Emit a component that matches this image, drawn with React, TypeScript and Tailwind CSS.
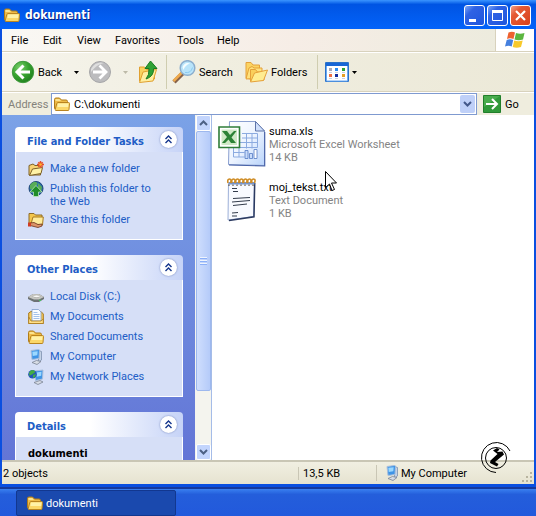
import React from "react";

interface IconProps {
  className?: string;
}

const FolderIcon: React.FC<IconProps> = ({ className = "w-4 h-4" }) => (
  <svg viewBox="0 0 16 16" className={className} aria-hidden="true">
    <path d="M.5 12.500V3.500Q.5 2 2 2h3.500L7.500 4H12q1.500 0 1.500 1.500v7z" fill="#eebb48" stroke="#b07c18" />
    <path d="M1.500 3.200h3.800L7 4.800H1.500z" fill="#fff0a8" />
    <path d="M2 14.500q-1 0-.8-1l1.600-6q.3-1 1.200-1h10.500q1 0 1 1l-.5 6q0 1-1 1z" fill="#fbd768" stroke="#b98420" />
    <path d="M3.300 11 4 7.500h10.500L14.200 11z" fill="#fff2a8" />
  </svg>
);

const ComputerIcon: React.FC<IconProps> = ({ className = "w-4 h-4" }) => (
  <svg viewBox="0 0 16 16" className={className} aria-hidden="true">
    <path d="M10.500 1.500l3 1V11l-3 2z" fill="#c4d2e6" stroke="#7d90ae" strokeWidth=".8" />
    <path d="M3 1.500 10.500.5q1 0 1 1l-.5 8-7 1z" fill="#3f94e6" stroke="#a9bfdc" />
    <path d="M4.300 2.800l5.400-.6-.4 4L4.700 7z" fill="#9bd8ff" />
    <path d="M4 13.500l4.500-2 4.500 1-4 3z" fill="#d8dde6" stroke="#7b8494" strokeWidth=".8" />
  </svg>
);

const NewFolderIcon = () => (
  <svg viewBox="0 0 16 16" className="w-4 h-4" aria-hidden="true">
    <path d="M1 14V4.500l4-1.500L7 4.500h5.500V14z" fill="#f7d272" stroke="#7d6128" />
    <path d="M1.500 14.500 4.500 8l10-1.500L13 12.500z" fill="#fff2a6" stroke="#7d6128" />
    <path d="M12.500 0v7M9 3.500h7M10.300 1.200l4.400 4.600M14.700 1.200l-4.400 4.600" stroke="#e5502a" strokeWidth="1.500" />
    <circle cx="12.500" cy="3.500" r="1.300" fill="#ffb52e" />
  </svg>
);

const PublishIcon = () => (
  <svg viewBox="0 0 16 16" className="w-4 h-4" aria-hidden="true">
    <circle cx="8" cy="7.500" r="7" fill="#2a6cab" stroke="#204878" />
    <path d="M2 4q3-4 6-3t0 4-2 4-4-1zM10 2l4 4-1 5-3-3z" fill="#58ad58" />
    <path d="M8 4.500l6 6.500h-3.500v4.500h-5V11H2z" fill="#1f8d28" stroke="#c9f0c4" strokeWidth=".7" />
  </svg>
);

const ShareIcon = () => (
  <svg viewBox="0 0 16 16" className="w-4 h-4" aria-hidden="true">
    <path d="M1 12V1.500h5L7.500 3H14v9z" fill="#f3c64c" stroke="#8d6a28" />
    <path d="M3 12l2-7h10.300L14.500 13z" fill="#ffec9c" stroke="#a87a20" />
    <path d="M2 11l4-.5 4 2 4-.5v2l-4 1.500-8-2z" fill="#dc9468" stroke="#6a3420" strokeWidth=".8" />
    <path d="M0 10.500h3v4H0z" fill="#cf3d25" />
  </svg>
);

const DiskIcon = () => (
  <svg viewBox="0 0 16 16" className="w-4 h-4" aria-hidden="true">
    <path d="M0 8l5-3h6l5 3v2l-5 3H6L0 10z" fill="#6d7274" />
    <path d="M0 8l5-3h6l5 3-5 2.500H6z" fill="#c6c6c2" />
    <ellipse cx="8.500" cy="7.300" rx="3.500" ry="1.300" fill="#f8f8f6" stroke="#95958f" strokeWidth=".5" />
    <path d="M11 11.300h2" stroke="#3ed45b" />
  </svg>
);

const DocumentsIcon = () => (
  <svg viewBox="0 0 16 16" className="w-4 h-4" aria-hidden="true">
    <path d="M.7 14.500V4L3 2.500h10L15.300 5v9.500z" fill="#f6c95a" stroke="#a87a20" />
    <path d="M4 12V.5h6.500L13 3v9z" fill="#fafdff" stroke="#7c9ccb" strokeWidth=".8" />
    <path d="M5.500 3.500h4M5.500 5.500h6M5.500 7.500h6M5.500 9.500h6" stroke="#8db2e6" strokeWidth=".8" />
    <path d="M.7 14.500V8L3 12h10l2.300-2v4.500z" fill="#ffe08a" stroke="#a87a20" strokeWidth=".8" />
  </svg>
);

const NetworkIcon = () => (
  <svg viewBox="0 0 16 16" className="w-4 h-4" aria-hidden="true">
    <path d="M7 2l8-1-.5 9-7 1.500z" fill="#3f94e6" stroke="#a9bfdc" />
    <path d="M8.500 3.500l5-.7-.3 4-4.500 1z" fill="#9bd8ff" />
    <path d="M6 13.500l6-2 3 1.500-5 2.500z" fill="#d8dde6" stroke="#7b8494" strokeWidth=".8" />
    <circle cx="4.500" cy="5.200" r="4.300" fill="#2457b8" />
    <path d="M1 4q2-4 5-2.500T4 5.500 1.500 6zM5 6l3-1-1 3-2 1z" fill="#42ad45" />
  </svg>
);

const BackIcon = () => (
  <svg viewBox="0 0 24 24" className="w-6 h-6" aria-hidden="true">
    <defs>
      <radialGradient id="backFill" cx=".35" cy=".3" r=".8">
        <stop offset="0" stopColor="#7ccf6e" />
        <stop offset=".5" stopColor="#37a32f" />
        <stop offset="1" stopColor="#1c7a1c" />
      </radialGradient>
    </defs>
    <circle cx="12" cy="12" r="10.700" fill="url(#backFill)" stroke="#3f9a3c" />
    <path d="M12.500 5.500 6 12l6.500 6.500M6.500 12H19" fill="none" stroke="#fff" strokeWidth="3" />
  </svg>
);

const ForwardIcon = () => (
  <svg viewBox="0 0 24 24" className="w-6 h-6" aria-hidden="true">
    <circle cx="12" cy="12" r="10.500" fill="#bcbcbe" stroke="#a6a6a8" />
    <path d="M3 9Q8 1 16 3 9 4 3 12z" fill="#dedede" />
    <path d="M11.500 5.500 18 12l-6.500 6.500M17.500 12H5" fill="none" stroke="#fff" strokeWidth="2.800" />
  </svg>
);

const UpIcon = () => (
  <svg viewBox="0 0 20 24" className="w-5 h-6" aria-hidden="true">
    <path d="M1.500 21V7h5l2 2.500h8V19z" fill="#f9d25d" stroke="#e0a030" />
    <path d="M1.500 22.500 5 12l13.500-2.500L15 21z" fill="#ffefa0" stroke="#e0a030" />
    <path d="M12.500 1 19 8.500h-3.500q.5 8-7.500 10.500 3.500-4 3-10.500H7z" fill="#2fa235" stroke="#187a22" />
  </svg>
);

const SearchIcon = () => (
  <svg viewBox="0 0 24 24" className="w-6 h-6" aria-hidden="true">
    <path d="M2 22 11 13" stroke="#85614a" strokeWidth="4.500" />
    <path d="M1.500 21 10 12.500" stroke="#efaa4d" strokeWidth="2.500" />
    <circle cx="15.500" cy="8" r="7.300" fill="#b9e4fa" stroke="#8caecd" strokeWidth="1.500" />
    <path d="M10.500 7Q13 1.500 18 3.500 13 5 11.500 10z" fill="#f4fdff" />
    <path d="M13 12.500q6 1 7.500-5" stroke="#8ccaf0" fill="none" />
  </svg>
);

const FoldersIcon = () => (
  <svg viewBox="0 0 24 24" className="w-6 h-6" aria-hidden="true">
    <path d="M2 18V2.500h5l2 2.500h6.500v4L6 19z" fill="#fbd462" stroke="#e5a13a" />
    <path d="M2 19 5 8l3-1.500 2 1.500h8v10z" fill="#ffe27c" stroke="#e5a13a" />
    <path d="M6.500 21V9.500h5l2 2.500H20v8z" fill="#f9cf5c" stroke="#e5a13a" />
    <path d="M6.500 22 10.500 13l13-3-4 10.500z" fill="#ffec90" stroke="#e5a13a" />
  </svg>
);

const ViewsIcon = () => (
  <svg viewBox="0 0 24 20" className="w-6 h-5" aria-hidden="true">
    <path d="M.5.5h23v19H.5z" fill="#fff" stroke="#2b72c8" />
    <path d="M1 1h22v3H1z" fill="#1766d6" />
    <path d="M1.500 4v15h21V4" fill="none" stroke="#6caaf2" />
    <path d="M4 6h3v3H4z" fill="#a8a8b8" />
    <path d="M10 6h3v3h-3z" fill="#2d8cf0" />
    <path d="M17 6h3v3h-3z" fill="#2ba137" />
    <path d="M4 12h3v3H4z" fill="#ef6f42" />
    <path d="M10 12h3v3h-3z" fill="#152d9c" />
    <path d="M17 12h3v3h-3z" fill="#e6a023" />
    <path d="M4 10.500h3M10 10.500h3M17 10.500h3M4 16.500h3M10 16.500h3M17 16.500h3" stroke="#c9d2e0" />
  </svg>
);

const WindowsFlag = () => (
  <svg viewBox="0 0 20 18" className="w-5 h-[18px]" aria-hidden="true">
    <path d="M3.500 1.500Q7 0 10 1.500L8.500 8Q5 6.500 2 8z" fill="#ee6230" />
    <path d="M11 2q4 1.500 8.500 0L18 8.500q-4.500 1.500-8.500 0z" fill="#5cb640" />
    <path d="M1.700 9Q5 7.500 8.200 9l-1.500 6.500Q3.500 14 0 15.500z" fill="#4580de" />
    <path d="M9.200 9.500q4 1.500 8.500 0L16 16q-4.500 1.500-8.300 0z" fill="#f8c92b" />
  </svg>
);

const ExcelIcon = () => (
  <svg viewBox="0 0 48 48" className="w-12 h-12" aria-hidden="true">
    <defs>
      <linearGradient id="sheet" x1="0" y1="0" x2="1" y2="1">
        <stop offset="0" stopColor="#ffffff" />
        <stop offset=".5" stopColor="#edf4ff" />
        <stop offset="1" stopColor="#b9d4fb" />
      </linearGradient>
    </defs>
    <path d="M11.500 1.500H37.500L46.500 11v34.500L10.500 44.500z" fill="url(#sheet)" stroke="#8ba0d0" />
    <path d="M46.700 12v34L11 45" fill="none" stroke="#4a64a8" strokeWidth="1.200" />
    <path d="M37.500 1.500V11h9z" fill="#cfdffb" stroke="#5f74a8" />
    <path d="M24 13.500h15.500v14H20M24 18h15.500M20 22.500h19.500M28.500 13.500v15M34 13.500v15M15.500 28v9h11M15.500 32.500h11M21 28v9" fill="none" stroke="#8cabe0" />
    <path d="M27 30.500h3v8h-3zM31.500 33.500h3v5h-3z" fill="#c9dcfb" stroke="#567cc4" strokeWidth=".8" />
    <path d="M36 29.500h3v9h-3z" fill="#fff" stroke="#567cc4" strokeWidth=".8" />
    <path d="M1 7h20.500v20.500H1z" fill="#fff" stroke="#2f7d38" strokeWidth="1.600" />
    <path d="M3.500 9.500h15.500v15.500H3.500z" fill="#cfe8c6" />
    <path d="M4 11h5l3 4 4-4h2.500L13.500 17.500 18 23h-5l-2.500-3.500L7 23H4l5-6z" fill="#2c8236" />
  </svg>
);

const TextFileIcon = () => (
  <svg viewBox="0 0 32 44" className="w-8 h-11" aria-hidden="true">
    <path d="M2.500 4.500h26L27.500 38.500 2 42z" fill="#f8faff" stroke="#9db0d8" />
    <path d="M28.700 5 28 38.800 3 42.500" fill="none" stroke="#2b3a60" strokeWidth="1.500" />
    <path d="M3 4h25.500v2.500H3z" fill="#7597d2" />
    {[3, 7, 11, 15, 19, 23, 27].map((x) => (
      <g key={x}>
        <path d={`M${x - 1} 5q-1-4 1.500-4t1 4`} fill="none" stroke="#cf8c24" strokeWidth="1.600" />
        <path d={`M${x} 6.500v1.500`} stroke="#4a3c28" />
      </g>
    ))}
    <path d="M6 10.500h5M7 13.500h5M7 20.500l17-1M6 24l18-1.500M7 27.500l14-1.500M6 35l6-.5M6 38h5" stroke="#333c4c" />
  </svg>
);

const Caret = ({ className = "fill-black" }: IconProps) => (
  <svg viewBox="0 0 5 3" className={`w-[5px] h-[3px] ${className}`} aria-hidden="true">
    <path d="M0 0h5L2.500 3z" />
  </svg>
);

interface Task {
  label: string;
  icon: React.ReactNode;
}

const tasks: Task[] = [
  { label: "Make a new folder", icon: <NewFolderIcon /> },
  { label: "Publish this folder to the Web", icon: <PublishIcon /> },
  { label: "Share this folder", icon: <ShareIcon /> },
];

const places: Task[] = [
  { label: "Local Disk (C:)", icon: <DiskIcon /> },
  { label: "My Documents", icon: <DocumentsIcon /> },
  { label: "Shared Documents", icon: <FolderIcon /> },
  { label: "My Computer", icon: <ComputerIcon /> },
  { label: "My Network Places", icon: <NetworkIcon /> },
];

const files = [
  {
    name: "suma.xls",
    type: "Microsoft Excel Worksheet",
    size: "14 KB",
    icon: <ExcelIcon />,
  },
  {
    name: "moj_tekst.txt",
    type: "Text Document",
    size: "1 KB",
    icon: <TextFileIcon />,
  },
];

interface PanelProps {
  title: string;
  children: React.ReactNode;
}

const Panel: React.FC<PanelProps> = ({ title, children }) => (
  <section className="shrink-0">
    <header className="flex h-[25px] items-center justify-between rounded-t-[4px] bg-linear-to-r from-white from-45% to-[#c6d3f7] pl-3 pr-[6px]">
      <h2 className="whitespace-nowrap font-['DejaVu_Sans_Condensed','DejaVu_Sans',sans-serif] font-bold text-[#215dc6] pt-[3px]">
        {title}
      </h2>
      <button
        aria-label={`Collapse ${title}`}
        className="flex h-[17px] w-[17px] items-center justify-center rounded-full bg-white shadow-[0_0_2px_#6f82b8]"
      >
        <svg viewBox="0 0 9 9" className="h-[9px] w-[9px]" aria-hidden="true">
          <path d="M1.500 4l3-3 3 3M1.500 8l3-3 3 3" fill="none" stroke="#14358c" strokeWidth="1.400" />
        </svg>
      </button>
    </header>
    <div className="border border-t-0 border-white bg-[#d6dff7]">{children}</div>
  </section>
);

const TaskList = ({ items }: { items: Task[] }) => (
  <ul className="pb-[9px] pt-[7px] pl-3 pr-7">
    {items.map((item) => (
      <li key={item.label}>
        <a href="#" className="flex min-h-5 items-start gap-[6px] py-[2px] text-[#215dc6]">
          <span className="shrink-0">{item.icon}</span>
          <span className="pt-px">{item.label}</span>
        </a>
      </li>
    ))}
  </ul>
);

const TitleBar = () => (
  <header className="flex h-[29px] shrink-0 items-center bg-linear-to-b from-[#3b95ff] via-[#0054e3] via-15% to-[#0363fa] pl-1 pr-[5px] text-white">
    <FolderIcon className="w-4 h-4" />
    <h1 className="ml-[5px] flex-1 pt-[2px] font-['DejaVu_Sans_Condensed','DejaVu_Sans',sans-serif] text-[12px] font-bold [text-shadow:1px_1px_#0a1f80]">
      dokumenti
    </h1>
    <div className="flex gap-[2px] pt-px">
      <button aria-label="Minimize" className="h-[21px] w-[21px] rounded-[3px] border border-white bg-linear-to-br from-[#7fa6f5] via-[#2f62e4] via-30% to-[#1d55dd]">
        <svg viewBox="0 0 19 19" aria-hidden="true"><path d="M4 13h7v3H4z" fill="#fff" /></svg>
      </button>
      <button aria-label="Maximize" className="h-[21px] w-[21px] rounded-[3px] border border-white bg-linear-to-br from-[#7fa6f5] via-[#2f62e4] via-30% to-[#1d55dd]">
        <svg viewBox="0 0 19 19" aria-hidden="true"><path d="M4.500 5.500h10v9h-10z" fill="none" stroke="#fff" /><path d="M4 4h11v3H4z" fill="#fff" /></svg>
      </button>
      <button aria-label="Close" className="h-[21px] w-[21px] rounded-[3px] border border-white bg-linear-to-br from-[#f0a08a] via-[#e55a35] via-30% to-[#d8401a]">
        <svg viewBox="0 0 19 19" aria-hidden="true"><path d="M5 5l9 9M14 5l-9 9" stroke="#fff" strokeWidth="2.200" /></svg>
      </button>
    </div>
  </header>
);

const MenuBar = () => (
  <nav className="flex h-[23px] shrink-0 border-b border-[#d8d2bd] bg-linear-to-r from-[#f9f8f4] via-[#f6ede6] via-55% to-[#ebebdc]">
    <div className="flex flex-1 items-center pl-[9px]">
      <button className="w-8 text-left">File</button>
      <button className="w-[34px] text-left">Edit</button>
      <button className="w-[38px] text-left">View</button>
      <button className="w-[62px] text-left">Favorites</button>
      <button className="w-10 text-left">Tools</button>
      <button className="text-left">Help</button>
    </div>
    <div className="flex w-[39px] items-center justify-center border-l border-[#d8d2bd] bg-white">
      <WindowsFlag />
    </div>
  </nav>
);

const Toolbar = () => (
  <div className="flex h-10 shrink-0 items-center border-b border-t border-t-white border-b-[#d8d2bd] bg-linear-to-r from-[#f6f4ec] via-[#f0eee0] via-40% to-[#ece9d8] pl-[9px]">
    <button className="flex w-[53px] items-center gap-[3px]">
      <BackIcon />
      Back
    </button>
    <button aria-label="Back history" className="flex w-6 justify-center"><Caret /></button>
    <button aria-label="Forward"><ForwardIcon /></button>
    <button aria-label="Forward history" className="flex w-[26px] justify-center"><Caret className="fill-[#bdbaa8]" /></button>
    <button aria-label="Up" className="w-7"><UpIcon /></button>
    <div className="h-[34px] w-px bg-[#cfcdb0]" />
    <button className="ml-[5px] flex w-[72px] items-center gap-[3px]">
      <SearchIcon />
      Search
    </button>
    <button className="flex w-[73px] items-center gap-[3px]">
      <FoldersIcon />
      Folders
    </button>
    <div className="h-[34px] w-px bg-[#cfcdb0]" />
    <button aria-label="Views" className="ml-[7px] flex items-center gap-[3px]">
      <ViewsIcon />
      <Caret />
    </button>
  </div>
);

const AddressBar = () => (
  <div className="flex h-[23px] shrink-0 items-center border-t border-white bg-[#efedde] pl-[6px]">
    <label htmlFor="address" className="w-[43px] text-[#84827a]">Address</label>
    <div className="flex h-[22px] flex-1 items-center border border-[#7f9ad0] bg-white pl-[2px] pr-px">
      <FolderIcon className="w-4 h-4" />
      <input
        id="address"
        type="text"
        defaultValue="C:\dokumenti"
        className="ml-1 min-w-0 flex-1 bg-transparent outline-none"
      />
      <button aria-label="Show addresses" className="flex h-[18px] w-[15px] items-center justify-center rounded-[2px] bg-[#bfd0f8]">
        <svg viewBox="0 0 9 6" className="h-[6px] w-[9px]" aria-hidden="true">
          <path d="M1 1l3.500 3.500L8 1" fill="none" stroke="#43588a" strokeWidth="2" />
        </svg>
      </button>
    </div>
    <button className="flex w-[57px] items-center gap-1 pl-[6px]">
      <svg viewBox="0 0 18 18" className="h-[18px] w-[18px]" aria-hidden="true">
        <path d="M.5.5h17v17H.5z" fill="#30993a" stroke="#217f2b" />
        <path d="M1 1h16L1 12z" fill="#5ab95a" opacity=".6" />
        <path d="M3 9h11M9 4l5 5-5 5" fill="none" stroke="#fff" strokeWidth="2" />
      </svg>
      Go
    </button>
  </div>
);

const Scrollbar = () => (
  <div className="flex w-4 shrink-0 flex-col bg-[#f4f4ee] pl-px">
    <button aria-label="Scroll up" className="flex h-4 shrink-0 items-center justify-center rounded-[2px] border border-white bg-[#c3d5fd]">
      <svg viewBox="0 0 9 6" className="h-[6px] w-[9px]" aria-hidden="true">
        <path d="M1 5l3.500-3.500L8 5" fill="none" stroke="#4d6185" strokeWidth="2" />
      </svg>
    </button>
    <div className="flex-1">
      <div className="flex h-[83%] flex-col items-center justify-center gap-px rounded-[2px] border border-[#9db8ee] bg-linear-to-r from-[#cfdefd] to-[#b5cbf9]">
        <span className="h-px w-[7px] bg-[#eef4fe] shadow-[0_1px_#8cb0f8]" />
        <span className="mt-px h-px w-[7px] bg-[#eef4fe] shadow-[0_1px_#8cb0f8]" />
        <span className="mt-px h-px w-[7px] bg-[#eef4fe] shadow-[0_1px_#8cb0f8]" />
      </div>
    </div>
    <button aria-label="Scroll down" className="flex h-4 shrink-0 items-center justify-center rounded-[2px] border border-white bg-[#c3d5fd]">
      <svg viewBox="0 0 9 6" className="h-[6px] w-[9px]" aria-hidden="true">
        <path d="M1 1l3.500 3.500L8 1" fill="none" stroke="#4d6185" strokeWidth="2" />
      </svg>
    </button>
  </div>
);

const StatusBar = () => (
  <footer className="relative flex h-6 shrink-0 items-center border-t-2 border-[#c9c6b5] bg-linear-to-b from-[#f1efe2] to-[#e6e3d0] pl-px">
    <span className="flex-1">2 objects</span>
    <span className="w-[78px] border-l border-[#c9c6b5] pl-1">13,5 KB</span>
    <span className="flex w-[158px] items-center gap-px border-l border-[#c9c6b5] pl-[7px]">
      <ComputerIcon />
      My Computer
    </span>
    <svg viewBox="0 0 12 12" className="absolute bottom-px right-px h-3 w-3" aria-hidden="true">
      <path d="M9 1h2v2H9zM5 5h2v2H5zM9 5h2v2H9zM1 9h2v2H1zM5 9h2v2H5zM9 9h2v2H9z" fill="#b8b49f" />
    </svg>
    <svg viewBox="0 0 32 32" className="absolute bottom-[10px] right-[22px] h-8 w-8" aria-hidden="true">
      <path d="M30 9A15 15 0 1 0 16 30.500" fill="none" stroke="#000" />
      <circle cx="16" cy="16" r="10.500" fill="none" stroke="#000" />
      <path d="M13 8.500l4-2.500 2.500 1.500L17 10l5.500-.5 1.500 3L15 20l3.500 2-1.500 2.500-7-3.500.5-2.500 7-6.500z" fill="#000" />
    </svg>
  </footer>
);

export default function App() {
  return (
    <div className="flex h-screen flex-col overflow-hidden bg-[#245edb] font-[Roboto,sans-serif] text-[11px] leading-[13px] text-black">
      <div className="flex min-h-0 flex-1 flex-col bg-[#0a4fe0] pb-[3px]">
        <TitleBar />
        <div className="mx-[2px] flex min-h-0 flex-1 flex-col">
          <MenuBar />
          <Toolbar />
          <AddressBar />
          <main className="flex min-h-0 flex-1">
            <aside className="flex w-[193px] shrink-0 flex-col gap-[15px] overflow-hidden bg-linear-to-b from-[#7ba2e7] to-[#6375d6] pl-[13px] pr-3 pt-3">
              <Panel title="File and Folder Tasks">
                <TaskList items={tasks} />
              </Panel>
              <Panel title="Other Places">
                <TaskList items={places} />
              </Panel>
              <Panel title="Details">
                <p className="px-3 py-[10px] font-['DejaVu_Sans_Condensed','DejaVu_Sans',sans-serif] font-bold">dokumenti</p>
              </Panel>
            </aside>
            <Scrollbar />
            <div className="relative flex-1 border-l border-[#a5bce8] bg-white pl-[6px] pt-[5px]">
              <ul className="flex flex-col gap-2">
                {files.map((file) => (
                  <li key={file.name} className="flex h-12 items-center gap-[3px]">
                    <div className="flex w-12 justify-center">{file.icon}</div>
                    <div className="whitespace-nowrap text-[#848484]">
                      <p className="text-black">{file.name}</p>
                      <p>{file.type}</p>
                      <p>{file.size}</p>
                    </div>
                  </li>
                ))}
              </ul>
              {/* mouse pointer */}
              <svg viewBox="0 0 12 21" className="absolute left-[113px] top-[56px] h-[21px] w-3" aria-hidden="true">
                <path d="M.5.500v16l4-3.500 2.500 6.500 2.500-1-3-6.500h5z" fill="#fff" stroke="#000" />
              </svg>
            </div>
          </main>
          <StatusBar />
        </div>
      </div>
      <div className="flex h-[29px] shrink-0 items-end border-t-2 border-[#16399c] bg-linear-to-b from-[#3a80f0] via-[#245edb] via-20% to-[#2259dc] pl-4">
        <button className="flex h-[26px] w-[160px] items-center gap-[3px] rounded-[2px] border border-[#12378f] bg-[#1a49ae] pl-[10px] text-white">
          <FolderIcon className="w-4 h-4" />
          dokumenti
        </button>
      </div>
    </div>
  );
}
